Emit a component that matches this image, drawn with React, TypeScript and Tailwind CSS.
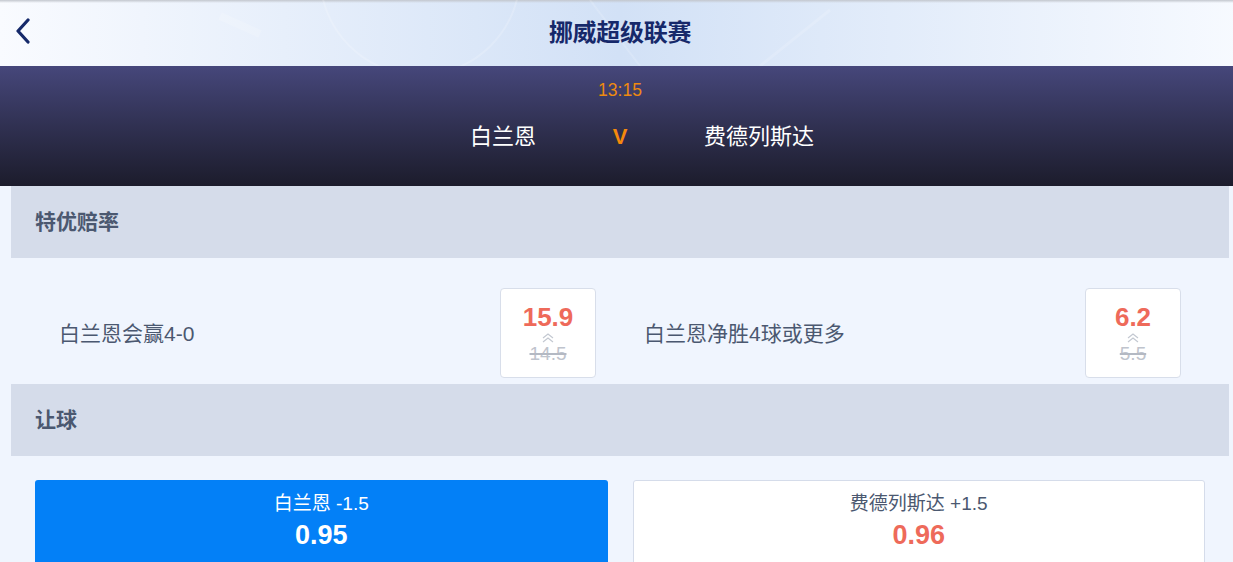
import React from "react";

function OddsBox({ now, was }: { now: string; was: string }) {
  return (
    <div className="flex h-[90px] w-[96px] shrink-0 flex-col items-center rounded-[4px] border border-[#d8deea] bg-white pt-[14px]">
      <div className="text-[26px] font-bold leading-[28px] text-[#ee6a5a]">{now}</div>
      <svg className="mt-[2px]" width="14" height="10" viewBox="0 0 14 10" fill="none" stroke="#c3c8d1" strokeWidth="1.2">
        <polyline points="2,5 7,1 12,5" />
        <polyline points="2,9 7,5 12,9" />
      </svg>
      <div className="text-[19px] leading-[22px] text-[#bfc4cd] line-through decoration-[#b4b9c3] decoration-[1.5px]">{was}</div>
    </div>
  );
}

function SectionTitle({ children }: { children: React.ReactNode }) {
  return (
    <div className="mx-[11px] flex h-[72px] items-center bg-[#d5dcea] pl-[24px] text-[21px] font-bold text-[#4b5870]">
      {children}
    </div>
  );
}

export default function App() {
  return (
    <div className="h-[562px] w-full overflow-hidden bg-[#f0f5fe] font-['Liberation_Sans','Noto_Sans_CJK_SC',sans-serif]">
      <div className="w-[1240px]">
        {/* Top bar */}
        <div className="relative flex h-[66px] items-center justify-center overflow-hidden bg-gradient-to-r from-[#f9fbff] via-[#d2e1f6] to-[#f7faff]">
          <div className="absolute left-0 right-0 top-0 h-[3px] bg-gradient-to-b from-[#c3c7ce] to-transparent" />
          <svg className="absolute left-0 top-0" width="1240" height="66" viewBox="0 0 1240 66" fill="none">
            <circle cx="420" cy="-25" r="100" stroke="#ffffff" strokeOpacity="0.18" strokeWidth="2" />
            <line x1="590" y1="0" x2="640" y2="66" stroke="#ffffff" strokeOpacity="0.15" strokeWidth="2" />
            <line x1="760" y1="66" x2="830" y2="10" stroke="#ffffff" strokeOpacity="0.15" strokeWidth="3" />
            <line x1="220" y1="16" x2="260" y2="34" stroke="#ffffff" strokeOpacity="0.15" strokeWidth="8" />
          </svg>
          <svg className="absolute left-[14px] top-[18px]" width="18" height="26" viewBox="0 0 18 26" fill="none">
            <polyline points="14,2 4,13 14,24" stroke="#15296a" strokeWidth="3.2" strokeLinecap="round" strokeLinejoin="round" />
          </svg>
          <div className="relative text-[24px] font-bold tracking-[-0.3px] text-[#16286a]">挪威超级联赛</div>
        </div>

        {/* Match banner */}
        <div className="flex h-[120px] flex-col items-center bg-gradient-to-b from-[#46477b] to-[#1c1c2c] pt-[13px]">
          <div className="text-[17.5px] leading-[22px] text-[#ee8a10]">13:15</div>
          <div className="mt-[21px] grid w-full grid-cols-[1fr_168px_1fr] text-[22px] leading-[30px] text-white">
            <div className="text-right">白兰恩</div>
            <div className="text-center font-bold text-[#f5890c]">V</div>
            <div className="text-left">费德列斯达</div>
          </div>
        </div>

        <SectionTitle>特优赔率</SectionTitle>
        <div className="mx-[11px] grid grid-cols-2 px-[24px] pb-[6px] pt-[30px] text-[21px] text-[#4b5870]">
          <div className="flex items-center justify-between pl-[24px] pr-[24px]">
            <span className="pt-[2px]">白兰恩会赢4-0</span>
            <OddsBox now="15.9" was="14.5" />
          </div>
          <div className="flex items-center justify-between pl-[24px] pr-[24px]">
            <span className="pt-[2px]">白兰恩净胜4球或更多</span>
            <OddsBox now="6.2" was="5.5" />
          </div>
        </div>

        <SectionTitle>让球</SectionTitle>
        <div className="mx-[11px] grid grid-cols-2 gap-[25px] px-[24px] pt-[24px]">
          <div className="flex h-[90px] flex-col items-center rounded-t-[3px] bg-[#0380f7] pt-[10px] text-white">
            <div className="text-[19px] leading-[28px]">白兰恩 -1.5</div>
            <div className="text-[27px] font-bold leading-[34px]">0.95</div>
          </div>
          <div className="flex h-[90px] flex-col items-center rounded-t-[3px] border border-[#d5dcea] bg-white pt-[9px]">
            <div className="text-[19px] leading-[28px] text-[#4b5870]">费德列斯达 +1.5</div>
            <div className="text-[27px] font-bold leading-[34px] text-[#ee6a5a]">0.96</div>
          </div>
        </div>
      </div>
    </div>
  );
}
